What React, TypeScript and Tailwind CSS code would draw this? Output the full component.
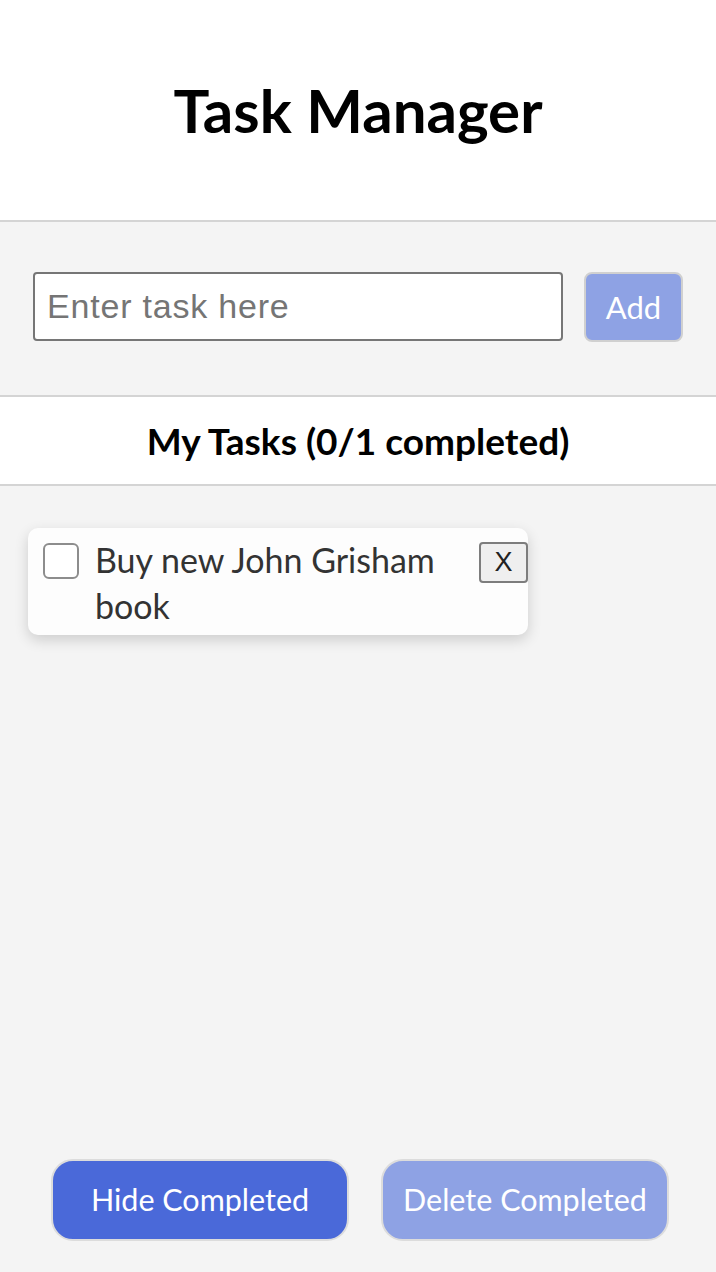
import { useState } from 'react';

const sans = "font-['Lato','Noto_Sans',sans-serif]";
const arial = "font-['Liberation_Sans',Arial,sans-serif]";

export default function App() {
  const [text, setText] = useState('');
  const [tasks] = useState([{ id: 1, title: 'Buy new John Grisham book', done: false }]);
  const completed = tasks.filter((t) => t.done).length;

  return (
    <div className={`flex min-h-screen flex-col bg-[#f4f4f4] ${sans}`}>
      <header className="flex h-[222px] items-center justify-center border-b-2 border-[#d4d4d4] bg-white">
        <h1 className="text-[60px] font-bold text-black">Task Manager</h1>
      </header>

      <div className="flex h-[173px] items-start gap-[21px] pl-[33px] pr-[33px] pt-[50px]">
        <input
          value={text}
          onChange={(e) => setText(e.target.value)}
          placeholder="Enter task here"
          className={`h-[69px] w-[530px] rounded-[4px] border-2 border-[#767676] bg-white px-[12px] text-[34px] tracking-[0.8px] text-[#333] placeholder:text-[#757575] outline-none ${arial}`}
        />
        <button className="h-[70px] w-[99px] rounded-[8px] border-2 border-[#d0d0d0] bg-[#8ea2e4] text-[31px] text-white">
          Add
        </button>
      </div>

      <div className="flex h-[91px] items-center justify-center border-y-2 border-[#d4d4d4] bg-white">
        <h2 className="text-[37px] font-bold text-black">
          My Tasks ({completed}/{tasks.length} completed)
        </h2>
      </div>

      <ul className="px-[28px] pt-[42px]">
        {tasks.map((t) => (
          <li
            key={t.id}
            className="flex w-[500px] items-start rounded-[10px] bg-[#fdfdfd] pb-[6px] pl-[15px] pt-[15px] shadow-[0_5px_14px_rgba(0,0,0,0.16)]"
          >
            <span className="h-[36px] w-[36px] shrink-0 rounded-[6px] border-2 border-[#8d8d8d] bg-white" />
            <span className="ml-[16px] -mt-[6px] w-[368px] text-[34px] leading-[46px] text-[#333]">
              {t.title}
            </span>
            <button
              className={`-mt-[1px] ml-auto h-[41px] w-[49px] shrink-0 rounded-[4px] border-2 border-[#7d7d7d] bg-[#efefef] text-[27px] leading-none text-[#222] ${arial}`}
            >
              X
            </button>
          </li>
        ))}
      </ul>

      <div className="mt-auto flex justify-center gap-[32px] pb-[31px] pl-[4px]">
        <button className="h-[82px] w-[298px] rounded-[22px] border-2 border-[#dcdcdc] bg-[#4a69d9] text-[30.5px] text-white">
          Hide Completed
        </button>
        <button className="h-[82px] w-[288px] rounded-[22px] border-2 border-[#dcdcdc] bg-[#8ea2e4] text-[30.5px] text-white">
          Delete Completed
        </button>
      </div>
    </div>
  );
}
